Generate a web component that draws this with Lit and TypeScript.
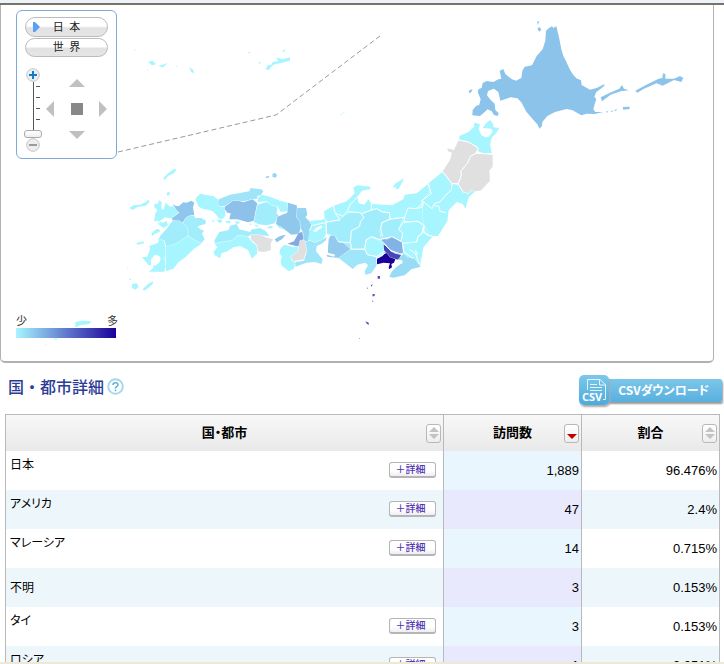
import { LitElement, html, svg, css } from "lit";
import { customElement, state } from "lit/decorators.js";

type Shape = [fill: string, d: string];

const C = "#a6f5ff";
const C2 = "#a2edfc";
const NONE = "#e0e0e0";

/* Hokkaido and the northern islands */
const north: Shape[] = [
  ["#8cc3eb", "M258,62 268,53 276,49 280,54 289,49 297,82 304,118 310,138 319,155 329,178 340,195 349,205 363,211 365,225 390,239 410,234 434,222 432,229 409,246 403,260 409,268 404,283 400,298 406,306 430,306 404,312 380,311 364,316 338,301 320,297 285,306 262,318 247,336 246,348 238,356 233,344 210,318 199,305 184,277 172,265 152,262 121,272 115,246 102,236 84,243 81,256 92,270 104,281 106,300 116,310 113,318 102,315 95,304 83,298 70,310 60,318 37,316 38,300 48,288 58,284 62,268 53,246 56,237 65,234 68,219 80,213 100,216 115,208 124,206 119,182 130,177 136,192 156,208 168,212 184,204 187,182 194,170 216,166 230,138 248,118 256,92Z"],
  ["#8cc3eb", "M422,262 450,248 478,236 486,225 492,236 507,241 482,244 452,254 426,274ZM526,242 552,228 576,216 596,206 607,204 609,190 616,192 616,206 642,206 660,198 670,204 664,216 642,210 608,227 590,220 552,236 532,248ZM488,291 510,290 508,297 490,299ZM438,304 444,304 442,309ZM452,302 459,302 456,307ZM462,300 474,298 466,303ZM232,54 240,52 244,60 237,65ZM232,34 238,34 233,45ZM26,242 38,237 34,246 28,250Z"],
];

/* Kyushu, Shikoku, Chugoku and western Kansai */
const west: Shape[] = [
  [C, "M104,130 112,133 118,121 125,127 124,145 130,150 137,128 150,140 158,138 178,157 158,170 158,176 134,172 128,178 116,184 130,188 140,182 144,196 130,204 112,190 122,190 112,182 102,184 106,160 112,150 103,142Z"],
  ["#90c6ed", "M157,131 166,137 176,139 190,127 200,128 214,122 223,128 219,142 223,166 212,166 200,172 186,190 178,183 158,182 156,174 178,158 168,148Z"],
  [C2, "M200,172 214,166 222,168 226,174 244,174 258,182 256,192 242,196 232,200 240,207 252,212 246,221 254,238 244,250 228,242 204,228 203,206 188,190Z"],
  [C2, "M158,182 178,183 188,190 203,206 204,228 168,252 140,262 132,240 114,240 122,226 140,206Z"],
  [C, "M95,220 108,208 118,207 119,215 104,222 96,229ZM117,238 132,242 136,264 134,300 138,320 132,335 86,335 98,326 102,312 104,318 118,308 122,296 118,288 106,284 100,290 92,300 94,316 86,316 66,292 82,290 90,268 88,258 104,252 114,248Z"],
  [C, "M136,262 168,252 204,228 244,252 222,266 196,292 176,306 160,326 138,334Z"],
  [C, "M226,116 240,101 262,106 280,108 296,120 296,136 314,142 316,168 306,178 296,174 290,166 276,152 250,147 236,140Z"],
  ["#9fe4f8", "M296,118 330,104 360,99 388,94 392,84 424,88 430,94 424,104 412,108 412,116 396,118 370,124 344,122 314,138 300,138 294,132Z"],
  ["#8dc1ea", "M314,140 340,122 356,122 370,127 398,118 412,130 406,160 402,182 384,187 352,178 328,178 332,160 322,158 314,148Z"],
  [C2, "M412,134 440,126 456,136 472,140 470,160 476,166 464,190 440,196 416,193 402,186Z"],
  [C, "M424,104 450,110 480,122 504,128 502,154 482,156 474,140 452,134 440,124 412,126 414,114Z"],
  ["#90c8ed", "M504,128 530,136 532,150 530,172 540,184 542,204 536,222 514,224 496,210 468,192 472,170 502,158ZM464,238 480,228 498,224 486,238 470,247Z"],
  ["#95d5f3", "M532,144 558,144 562,164 556,172 574,190 572,228 562,248 548,238 550,220 542,204 540,184 530,172Z"],
  ["#82abe4", "M502,251 522,244 536,218 547,216 550,238 536,260Z"],
  [C2, "M284,240 298,216 326,210 330,197 350,192 358,208 390,216 396,208 420,204 436,212 448,228 420,226 392,224 384,230 354,226 336,242 298,248 284,252Z"],
  [C, "M284,252 298,248 336,242 354,226 384,230 396,246 410,256 412,280 396,296 384,270 360,258 340,262 322,274 304,280 301,295 284,286 280,276 292,262Z"],
  [NONE, "M392,225 420,224 436,232 460,238 452,250 453,270 432,276 414,274 411,254 394,240Z"],
  [C, "M482,264 494,254 520,262 536,260 534,274 512,290 516,302 526,306 522,326 506,334 484,316 482,300 486,290 478,280Z"],
  [NONE, "M540,242 550,240 558,248 568,252 566,268 556,280 552,298 520,304 512,290 534,274Z"],
  [C, "M130,54 146,38 162,27 170,28 162,40 144,48 134,61ZM28,144 40,136 60,134 78,126 86,118 88,126 76,138 54,140 38,150ZM140,98 148,95 150,104 142,107ZM48,250 70,244 72,250 54,254ZM36,372 50,370 56,380 46,389 36,384ZM68,388 84,372 100,363 98,372 82,386 72,392ZM28,354 34,360 28,360ZM22,320 26,324 22,324Z"],
  ["#95d5f3", "M457,42 465,38 471,46 467,53 458,51ZM436,50 448,47 446,53 438,54Z"],
];

/* Specks of the Seto Inland Sea */
const inland: Shape[] = [
  [C, "M276,180 286,184 278,186ZM290,180 302,178 308,184 298,190ZM316,184 328,182 334,188 322,190ZM344,186 356,184 360,190 350,192ZM388,190 396,192 390,196ZM404,194 420,198 408,200ZM440,202 452,198 462,200 450,206ZM468,196 486,200 490,208 478,204Z"],
];

/* Chubu, Kanto and southern Tohoku */
const east: Shape[] = [
  [C, "M162,154 190,138 230,124 254,100 250,82 264,76 302,80 300,88 276,92 262,110 266,130 282,134 296,118 304,132 366,136 400,118 404,104 440,100 474,72 514,38 546,72 564,74 580,98 560,126 536,150 532,182 504,228 490,228 460,262 450,318 424,296 398,288 398,246 340,290 320,294 244,268 206,246 168,222 160,238 136,248 114,240 118,214 126,196 118,188 124,180 112,176 150,181 164,176Z"],
  [C2, "M208,180 240,156 270,158 304,152 322,146 340,156 358,158 360,178 336,190 330,212 334,240 310,230 290,240 282,268 244,268 206,246 200,232 182,226 168,222 170,188Z"],
  [C2, "M336,188 360,176 398,172 386,208 398,222 394,242 366,230 334,238 330,212Z"],
  ["#9fe4f8", "M102,302 112,270 106,246 120,242 136,248 160,238 170,230 168,240 158,250 140,258 138,274 158,298 154,312 134,306 110,308 76,320 76,306Z"],
  ["#93caee", "M176,238 182,226 194,228 204,246 216,246 242,268 208,294 172,290 170,284 192,290 196,284 174,278 174,264Z"],
  ["#9fe6fa", "M206,294 242,268 284,266 292,284 318,288 320,316 304,340 286,344 284,334 294,316 286,308 262,314 248,327 232,314Z"],
  [C, "M284,268 290,240 304,230 326,244 342,254 340,276 320,288 294,284Z"],
  ["#82b3e6", "M332,238 354,238 366,229 396,246 399,278 384,284 360,268 346,252Z"],
  ["#4448b9", "M341,252 352,262 362,274 378,282 393,284 388,300 362,294 350,280 342,270Z"],
  ["#1b009a", "M321,296 338,288 346,276 354,284 360,292 376,298 372,308 364,312 366,322 358,328 356,322 360,310 340,308 321,313Z"],
  ["#99dbf4", "M358,350 366,334 380,320 398,308 396,300 384,300 400,280 412,292 432,294 452,320 424,328 404,346 370,353Z"],
  [C, "M368,84 374,72 402,55 396,68 386,86 376,88 380,80Z"],
  ["#4a4fc0", "M323,348 330,348 330,356 323,356ZM302,376 308,373 305,380ZM290,383 294,383 292,387ZM307,403 315,402 313,409 308,409ZM306,422 310,422 309,427ZM286,484 296,488 297,494 291,492ZM267,534 270,536 267,537Z"],
];

const tohoku: Shape[] = [
  [C, "M178,78 206,66 222,50 222,38 240,42 236,56 244,76 256,82 266,80 278,66 274,56 248,54 258,40 270,30 280,42 280,52 298,54 288,70 276,82 270,104 276,130 250,130 234,124 234,112 206,96 178,90Z"],
  [NONE, "M128,184 150,150 156,128 144,124 142,115 162,120 176,90 206,96 235,114 228,130 212,138 202,160 182,184 184,196 174,220 156,220Z"],
  [NONE, "M228,130 256,132 278,134 278,170 268,182 270,212 242,242 226,244 212,240 206,250 190,246 174,222 184,196 182,184 202,160 212,138Z"],
  [C, "M88,218 128,186 156,221 174,224 190,247 206,251 214,240 226,244 206,262 196,296 188,282 170,276 146,300 142,332 114,378 90,378 70,340 66,272 90,246Z"],
];

/* Okinawa inset and scattered islands */
const islands: Shape[] = [
  [C, "M54,96 68,92 78,103 66,106ZM86,106 98,104 113,98 98,113ZM180,118 176,111 188,118 194,131 184,126ZM406,118 414,106 424,104 428,96 444,94 440,82 456,88 480,82 480,92 462,97 430,104 416,120ZM354,66 360,66 358,72ZM12,57 20,61 14,61ZM632,252 637,250 635,256ZM138,107 142,109 138,111ZM456,64 468,56 462,66ZM386,96 394,98 388,102ZM640,246 645,248 640,250ZM52,117 56,118 52,120Z"],
  [C, "M-164,876 -140,872 -116,874 -122,882 -150,886 -164,892ZM-232,926 -216,926 -222,930ZM-230,876 -225,878 -230,880ZM-254,942 -250,944 -254,945Z"],
];

const eastBorders =
  "M190,138 196,160 218,168 232,154 240,134 262,112M196,160 210,180 170,186 164,176M168,186 170,222M232,156 270,158 282,172 272,184 268,200 244,212 242,238 240,248 206,246M274,162 304,150 304,132M304,150 320,146 336,156 358,158 360,178 336,188 332,206 338,230M360,178 404,172 402,184 386,208 398,220 394,240M404,172 414,144 438,146 456,132 460,118 484,98 474,72M402,186 444,184 462,196 456,220 444,230 440,246 398,250M462,196 458,214 474,226 488,228M398,250 402,276 430,296M418,268 436,280 448,312M436,270 442,284M168,222 182,226M242,248 244,268 284,268 288,240 304,230 332,240M128,196 166,188M118,212 126,196M284,268 292,284 320,290 340,276M332,238 366,230 396,246M342,252 362,272 398,284M322,294 348,278";

const shapes = (list: Shape[]) => list.map(([f, d]) => svg`<path fill=${f} d=${d} />`);

interface Row {
  name: string;
  visits: string;
  share: string;
  detail: boolean;
}

const rows: Row[] = [
  { name: "日本", visits: "1,889", share: "96.476%", detail: true },
  { name: "アメリカ", visits: "47", share: "2.4%", detail: true },
  { name: "マレーシア", visits: "14", share: "0.715%", detail: true },
  { name: "不明", visits: "3", share: "0.153%", detail: false },
  { name: "タイ", visits: "3", share: "0.153%", detail: true },
  { name: "ロシア", visits: "1", share: "0.051%", detail: true },
];

@customElement("japan-map")
class JapanMap extends LitElement {
  static styles = css`
    :host { display: block; }
    .map { display: block; width: 100%; }
    .land { stroke: #fff; stroke-width: 2; stroke-linejoin: round; paint-order: stroke; }
    .border { fill: none; stroke: #fff; stroke-width: 3; stroke-linejoin: round; }
    .route { fill: none; stroke: #999; stroke-width: 1; stroke-dasharray: 5 3; }
  `;
  render() {
    return html`<svg class="map" viewBox="1 5 712 356" role="img" aria-label="日本地図">
      <path class="route" d="M118,152 276,115 380,36" />
      <g transform="translate(130 30) scale(.33333)">${shapes(islands)}</g>
      <g transform="translate(460 10) scale(.33333)">${shapes(north)}</g>
      <g transform="translate(120 160) scale(.33333)">
        <g class="land">${shapes(west)}</g>
        ${shapes(inland)}
      </g>
      <g transform="translate(270 160) scale(.33333)">
        ${shapes(east.slice(0, 1))}
        <g class="land">${shapes(east.slice(1))}</g>
        <path class="border" d=${eastBorders} />
        <path fill="#fff" d="M129,214 138,204 154,196 157,203 148,208 138,216ZM112,168 130,176 150,172 158,166 160,172 150,180 124,182Z" />
      </g>
      <g transform="translate(400 110) scale(.33333)">
        <g class="land">${shapes([...tohoku].reverse())}</g>
        <path class="border" d="M84,222 94,250 66,272 96,296 104,280 120,276 138,254 154,240 156,221 174,222 190,247M156,221 128,185M104,286 118,290 120,304 138,308M66,272 70,282 66,292 48,296M174,222 184,196 182,184 202,160 212,138 228,130 276,132M176,90 206,96 235,114 228,130M12,336 54,334 72,346 66,370 54,380 50,396M72,346 72,366 86,376 98,378" />
      </g>
    </svg>`;
  }
}

@customElement("map-controls")
class MapControls extends LitElement {
  @state() private zoom = 0;

  static styles = css`
    :host {
      display: flex; flex-direction: column; gap: 1px; box-sizing: border-box; width: 101px; height: 149px;
      padding: 6px 8px; border: 1px solid #7fa9d6; border-radius: 6px; background: #fff;
      font: 12px/16px "Liberation Sans", "Noto Sans CJK JP", sans-serif;
    }
    button { margin: 0; padding: 0; border: 0; background: none; font: inherit; color: #222; display: grid; place-items: center; }
    .pill {
      position: relative; height: 20px; border: 1px solid #bbb; border-radius: 10px; font-size: 11px;
      background: linear-gradient(#fff 0 45%, #e2e2e2 55%, #e6e6e6) border-box;
    }
    .mark { position: absolute; left: 7px; top: 4px; width: 7px; height: 10px; }
    .lower { display: flex; gap: 4px; margin: 10px 1px 0 -1px; }
    .zoom { display: flex; flex-direction: column; align-items: center; width: 18px; }
    .round { width: 14px; height: 14px; }
    .round svg, .arrow svg { display: block; }
    .slider {
      appearance: none; writing-mode: vertical-lr; direction: rtl; box-sizing: border-box;
      width: 18px; height: 56px; margin: 0;
      background:
        linear-gradient(#555, #555) 9px 0 / 1px 100% no-repeat,
        repeating-linear-gradient(transparent 0 4px, #555 4px 5px, transparent 5px 11px) 12px 0 / 4px 44px no-repeat;
    }
    .slider::-webkit-slider-thumb {
      appearance: none; box-sizing: border-box; width: 18px; height: 8px;
      border: 1px solid #aaa; border-radius: 3px; background: linear-gradient(#fff, #eee);
    }
    .pad { display: grid; flex: 1; grid-template: 8px 1fr 8px / 8px 1fr 8px; place-items: center; height: 60px; margin-top: 11px; }
    .up { grid-area: 1 / 2; }
    .left { grid-area: 2 / 1; }
    .home { grid-area: 2 / 2; }
    .right { grid-area: 2 / 3; }
    .down { grid-area: 3 / 2; }
  `;

  private round(label: string, color: string, d: string, step: number) {
    return html`<button class="round" aria-label=${label} @click=${() => (this.zoom = Math.max(0, Math.min(4, this.zoom + step)))}>
      <svg width="14" height="14" viewBox="0 0 14 14">
        <circle cx="7" cy="7" r="6.3" fill="#eee" stroke="#c4c4c4" />
        <path d=${d} stroke=${color} stroke-width=${step > 0 ? 2 : 1.4} />
      </svg>
    </button>`;
  }

  private arrow(cls: string, label: string, w: number, h: number, d: string) {
    return html`<button class="arrow ${cls}" aria-label=${label}>
      <svg width=${w} height=${h} viewBox="0 0 ${w} ${h}"><path d=${d} fill=${cls === "home" ? "#888" : "#c0c0c0"} /></svg>
    </button>`;
  }

  render() {
    return html`
      <button class="pill">
        <svg class="mark" viewBox="0 0 7 10"><path d="M0 0 2 0 7 5 2 10 0 10Z" fill="#5aa0f5" /></svg>日&ensp;本
      </button>
      <button class="pill">世&ensp;界</button>
      <div class="lower">
        <div class="zoom">
          ${this.round("拡大", "#0d7ed0", "M3 7H11M7 3V11", 1)}
          <input class="slider" type="range" min="0" max="4" aria-label="ズーム" .value=${String(this.zoom)}
            @input=${(e: Event) => (this.zoom = Number((e.target as HTMLInputElement).value))} />
          ${this.round("縮小", "#777", "M3 7H11", -1)}
        </div>
        <div class="pad">
          ${this.arrow("up", "上", 16, 8, "M8 0 16 8H0Z")}
          ${this.arrow("left", "左", 8, 16, "M0 8 8 0V16Z")}
          ${this.arrow("home", "中央", 12, 12, "M0 0H12V12H0Z")}
          ${this.arrow("right", "右", 8, 16, "M8 8 0 0V16Z")}
          ${this.arrow("down", "下", 16, 8, "M0 0H16L8 8Z")}
        </div>
      </div>`;
  }
}

@customElement("app-root")
class AppRoot extends LitElement {
  static styles = css`
    :host {
      display: flex; flex-direction: column; height: 100vh; overflow: hidden; background: #fff; color: #000;
      font: 13px/16px "Liberation Sans", "Noto Sans CJK JP", sans-serif;
    }
    .top { flex: none; height: 3px; background: #edf2f8; border-bottom: 2px solid #77736a; }
    .page { flex: 1; min-height: 0; overflow: hidden; }
    .foot { flex: none; height: 2px; background: #ece9d8; }
    .panel {
      position: relative; margin-right: 10px; border: 1px solid #b9b0b0; border-top: 0;
      border-bottom: 2px solid #b5b0b0; border-radius: 0 0 5px 5px;
    }
    .controls { position: absolute; left: 15px; top: 5px; }
    .legend { position: absolute; left: 15px; bottom: 23px; width: 100px; }
    .ends { display: flex; justify-content: space-between; margin-right: -2px; font-size: 11px; line-height: 13px; color: #333; }
    .scale { height: 10px; background: linear-gradient(90deg, #a6f5ff, #1b009a); }
    .head { display: flex; justify-content: space-between; align-items: flex-start; height: 32px; margin: 11px 2px 8px 8px; }
    .title { display: flex; align-items: center; gap: 3px; }
    h2 { margin: 0; font: 500 16px/24px "Noto Sans CJK JP", sans-serif; color: #2b3d94; }
    .help { display: block; width: 17px; height: 17px; padding: 0; border: 0; background: none; }
    .help svg { display: block; }
    .csv { display: flex; align-items: center; margin-top: 1px; color: #fff; text-decoration: none; }
    .icon {
      z-index: 1; width: 30px; height: 30px; border-radius: 5px; box-shadow: 1px 2px 2px #aaa;
      background: linear-gradient(#7cc8ea, #4eaadb);
    }
    .icon svg { display: block; }
    .icon text { font: 700 11px "Noto Sans", sans-serif; fill: #fff; }
    .label {
      box-sizing: border-box; height: 23px; margin-left: -4px; padding: 0 13px; border-radius: 2px;
      box-shadow: 1px 2px 2px #999; background: linear-gradient(#7cc6ea, #58b0de);
      font: 700 12px/22px "Noto Sans CJK JP", sans-serif; font-feature-settings: "palt";
    }
    .tablebox { margin: 0 4px 0 5px; }
    table { width: 100%; table-layout: fixed; border-collapse: separate; border-spacing: 0; border: 1px solid #b9b9bb; }
    .num { width: 138px; }
    th, td { box-sizing: border-box; padding: 0; border-left: 1px solid #b9b9bb; }
    th:first-child, td:first-child { border-left: 0; }
    th { height: 36px; background: linear-gradient(#f8f8f8, #e9e9e9); font-weight: 700; }
    .th { display: grid; grid-template-columns: 15px 1fr 15px; align-items: center; padding: 0 2px; }
    .th span { grid-column: 2; font-feature-settings: "palt"; }
    .sort {
      display: grid; place-items: center; width: 15px; height: 19px; padding: 0; box-sizing: border-box;
      border: 1px solid #b8b8b8; border-radius: 3px; background: linear-gradient(#fff, #eee);
    }
    td { height: 39px; }
    .cell { display: flex; align-items: center; justify-content: space-between; height: 39px; padding: 0 7px 0 4px; box-sizing: border-box; }
    .name { font-feature-settings: "palt"; font-size: 12px; line-height: 16px; }
    .detailed { padding-bottom: 2px; }
    .detailed .name { align-self: flex-start; margin-top: 6px; }
    .value { text-align: right; padding: 0 2px; }
    tbody tr:nth-child(even) { background: #edf6fa; }
    .sorted { background: #eaf6fd; }
    tbody tr:nth-child(even) .sorted { background: #e9e9fe; }
    .more {
      width: 47px; height: 16px; padding: 0 4px 0 0; border: 1px solid #b5b5b8; border-bottom-width: 2px; border-radius: 3px;
      background: linear-gradient(#fff 60%, #eee); color: #5336b4; font: 500 10px/12px "Noto Sans CJK JP", sans-serif;
    }
  `;

  private header(label: string, sorted = false) {
    return html`<div class="th"><span>${label}</span>
      <button class="sort" aria-label="${label}で並べ替え">
        <svg width="10" height="14" viewBox="0 0 10 14">
          ${sorted
            ? svg`<path fill="#c00000" d="M0 8H10L5 13Z" />`
            : svg`<path fill="#c3c3c3" d="M0 6H10L5 1ZM0 8H10L5 13Z" />`}
        </svg>
      </button></div>`;
  }

  render() {
    return html`
      <div class="top"></div>
      <main class="page">
        <section class="panel">
          <japan-map></japan-map>
          <map-controls class="controls"></map-controls>
          <div class="legend">
            <div class="ends"><span>少</span><span>多</span></div>
            <div class="scale"></div>
          </div>
        </section>
        <div class="head">
          <div class="title">
            <h2>国・都市詳細</h2>
            <button class="help" aria-label="ヘルプ">
              <svg width="17" height="17" viewBox="0 0 17 17" fill="none" stroke="#8fcbe6" stroke-width="2">
                <circle cx="8.5" cy="8.5" r="7.3" stroke="#a5d8ec" />
                <path d="M6 7Q6 4.7 8.5 4.7T11 6.8Q11 8 9.4 8.7 8.5 9.2 8.5 10.4M8.5 11.5V13.2" stroke="#62b4dc" stroke-width="1.6" />
              </svg>
            </button>
          </div>
          <a class="csv" href="#csv">
            <span class="icon">
              <svg width="30" height="30" viewBox="0 0 30 30" aria-hidden="true">
                <path d="M8.500 15V4.500H21L26.500 9.500V24.500H24M20.500 5V10H26M11 9.500H18M11 12.500H23M11 15.500H23" fill="none" stroke="#e4f5fc" />
                <text x="3" y="26">CSV</text>
              </svg>
            </span>
            <span class="label">CSVダウンロード</span>
          </a>
        </div>
        <div class="tablebox">
          <table>
            <colgroup><col /><col class="num" /><col class="num" /></colgroup>
            <thead>
              <tr>
                <th>${this.header("国・都市")}</th>
                <th>${this.header("訪問数", true)}</th>
                <th>${this.header("割合")}</th>
              </tr>
            </thead>
            <tbody>
              ${rows.map(
                (r) => html`<tr>
                  <td><div class="cell ${r.detail ? "detailed" : ""}">
                    <span class="name">${r.name}</span>
                    ${r.detail ? html`<button class="more">＋詳細</button>` : ""}
                  </div></td>
                  <td class="value sorted">${r.visits}</td>
                  <td class="value">${r.share}</td>
                </tr>`
              )}
            </tbody>
          </table>
        </div>
      </main>
      <div class="foot"></div>`;
  }
}
